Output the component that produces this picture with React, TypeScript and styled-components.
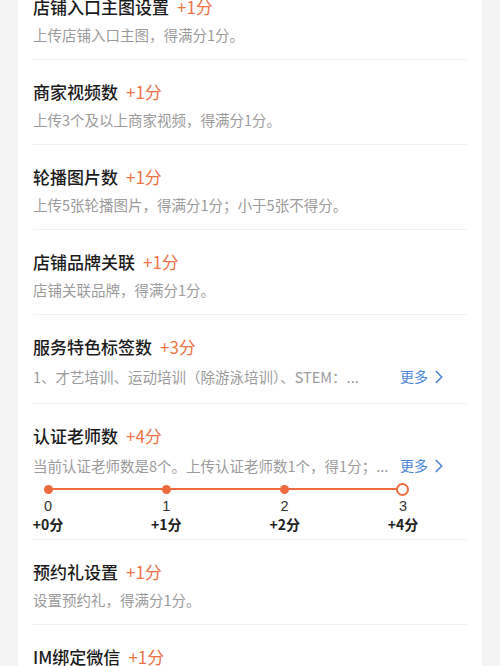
import { createGlobalStyle } from "styled-components";
import styled from "styled-components";
import { ChevronRight } from "lucide-react";

const GlobalStyle = createGlobalStyle`
	html, body {
		margin: 0;
		padding: 0;
		background: #f4f4f4;
	}
	body {
		font-family: "Noto Sans CJK SC", "Noto Sans", sans-serif;
		-webkit-font-smoothing: antialiased;
	}
`;

const Page = styled.div`
	height: 666px;
	overflow: hidden;
	padding: 0 18px;
`;

const Card = styled.div`
	background: #ffffff;
	margin-top: -25px;
	padding: 0 15px;
`;

const Row = styled.div`
	padding: 19px 0 15px;
	border-bottom: 1px solid #f0f0f0;

	&:last-child {
		border-bottom: none;
	}
`;

const Title = styled.div`
	display: flex;
	align-items: center;
	gap: 8px;
	height: 24px;
	font-size: 17px;
	font-weight: 500;
	color: #1b1b1b;
	white-space: nowrap;
`;

const Score = styled.span`
	font-weight: 400;
	color: #ee7448;
`;

const Desc = styled.div<{ $more?: boolean }>`
	display: flex;
	align-items: center;
	margin-top: 6px;
	height: ${(p) => (p.$more ? 24 : 20)}px;
	font-size: 14.5px;
	color: #9b9b9b;
`;

const DescText = styled.span`
	flex: 1;
	min-width: 0;
	overflow: hidden;
	white-space: nowrap;
	text-overflow: ellipsis;
`;

const More = styled.span`
	display: flex;
	align-items: center;
	margin-right: 17px;
	margin-left: 6px;
	color: #4b86d6;
	font-size: 14px;

	svg {
		width: 22px;
		height: 22px;
		margin-top: 1px;
	}
`;

const Timeline = styled.div`
	width: 385px;
	margin-top: 6px;
	margin-bottom: -9px;
`;

const Track = styled.div`
	position: relative;
	display: flex;
	justify-content: space-between;
	height: 12px;

	&::before {
		content: "";
		position: absolute;
		left: 15px;
		right: 15px;
		top: 5px;
		height: 1.5px;
		background: #ee6b40;
	}
`;

const Step = styled.div`
	position: relative;
	width: 30px;
	display: flex;
	justify-content: center;
	align-items: center;
`;

const Dot = styled.span<{ $hollow?: boolean }>`
	box-sizing: border-box;
	width: ${(p) => (p.$hollow ? 13 : 9)}px;
	height: ${(p) => (p.$hollow ? 13 : 9)}px;
	border-radius: 50%;
	background: ${(p) => (p.$hollow ? "#ffffff" : "#ee6b40")};
	border: ${(p) => (p.$hollow ? "2.5px solid #ee6b40" : "none")};
`;

const Labels = styled.div`
	display: flex;
	justify-content: space-between;
	margin-top: 2px;
`;

const Label = styled.div`
	width: 30px;
	display: flex;
	flex-direction: column;
	align-items: center;
	white-space: nowrap;
`;

const Count = styled.span`
	font-size: 14.5px;
	line-height: 18px;
	color: #333333;
	font-family: "Liberation Sans", "Noto Sans CJK SC", sans-serif;
`;

const Points = styled.span`
	font-size: 14px;
	line-height: 18px;
	font-weight: 700;
	color: #222222;
`;

interface IItem {
	title: string;
	score: string;
	desc: string;
	more?: boolean;
	steps?: { count: string; points: string }[];
}

const items: IItem[] = [
	{ title: "店铺入口主图设置", score: "+1分", desc: "上传店铺入口主图，得满分1分。" },
	{ title: "商家视频数", score: "+1分", desc: "上传3个及以上商家视频，得满分1分。" },
	{ title: "轮播图片数", score: "+1分", desc: "上传5张轮播图片，得满分1分；小于5张不得分。" },
	{ title: "店铺品牌关联", score: "+1分", desc: "店铺关联品牌，得满分1分。" },
	{
		title: "服务特色标签数",
		score: "+3分",
		desc: "1、才艺培训、运动培训（除游泳培训）、STEM：...",
		more: true,
	},
	{
		title: "认证老师数",
		score: "+4分",
		desc: "当前认证老师数是8个。上传认证老师数1个，得1分；...",
		more: true,
		steps: [
			{ count: "0", points: "+0分" },
			{ count: "1", points: "+1分" },
			{ count: "2", points: "+2分" },
			{ count: "3", points: "+4分" },
		],
	},
	{ title: "预约礼设置", score: "+1分", desc: "设置预约礼，得满分1分。" },
	{ title: "IM绑定微信", score: "+1分", desc: "绑定微信，得满分1分。" },
];

function App() {
	return (
		<Page>
			<GlobalStyle />
			<Card>
				{items.map((item) => (
					<Row key={item.title}>
						<Title>
							{item.title}
							<Score>{item.score}</Score>
						</Title>
						<Desc $more={item.more}>
							<DescText>{item.desc}</DescText>
							{item.more && (
								<More>
									更多
									<ChevronRight strokeWidth={1.8} />
								</More>
							)}
						</Desc>
						{item.steps && (
							<Timeline>
								<Track>
									{item.steps.map((s, i) => (
										<Step key={s.count}>
											<Dot $hollow={i === item.steps!.length - 1} />
										</Step>
									))}
								</Track>
								<Labels>
									{item.steps.map((s) => (
										<Label key={s.count}>
											<Count>{s.count}</Count>
											<Points>{s.points}</Points>
										</Label>
									))}
								</Labels>
							</Timeline>
						)}
					</Row>
				))}
			</Card>
		</Page>
	);
}

export default App;
